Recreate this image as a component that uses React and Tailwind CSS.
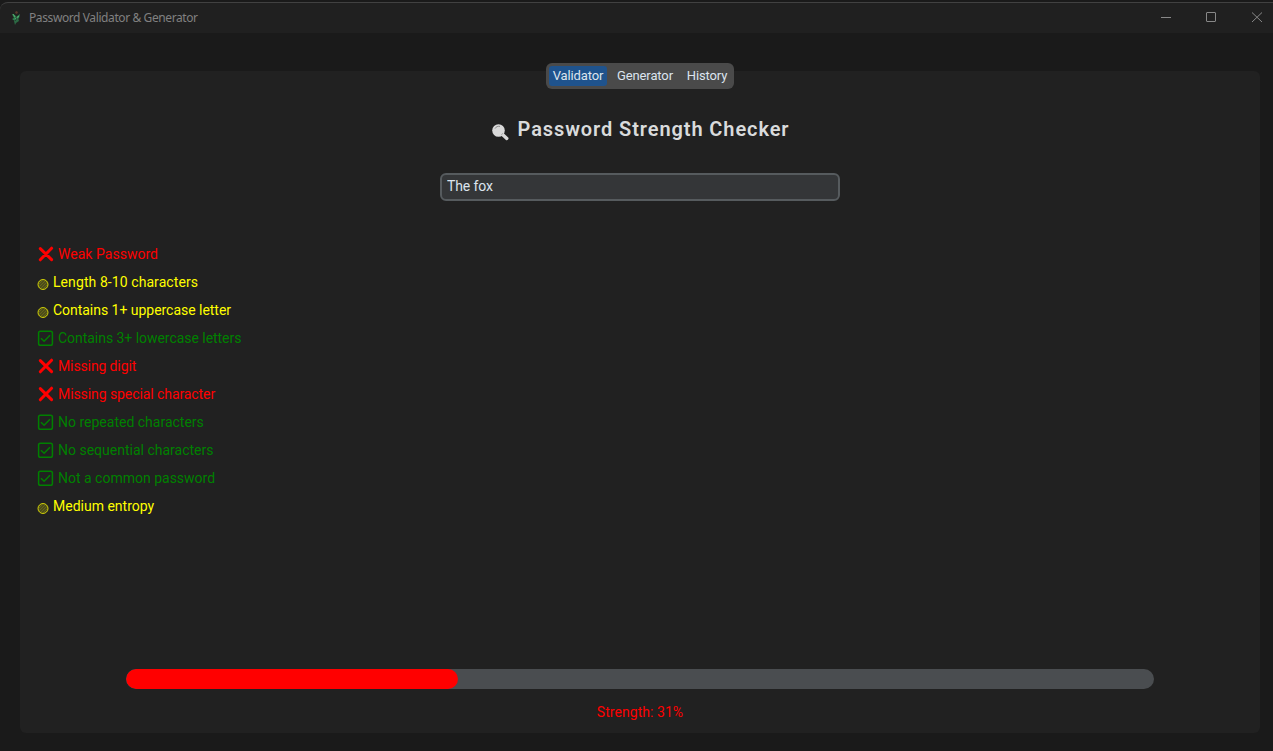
const tabs = ['Validator', 'Generator', 'History'];

const checks = [
  { status: 'fail', text: 'Weak Password', spacing: 'tracking-[0.03px]' },
  { status: 'partial', text: 'Length 8-10 characters', spacing: 'tracking-[0.08px]' },
  { status: 'partial', text: 'Contains 1+ uppercase letter', spacing: 'tracking-[-0.03px]' },
  { status: 'pass', text: 'Contains 3+ lowercase letters', spacing: 'tracking-[-0.04px]' },
  { status: 'fail', text: 'Missing digit', spacing: 'tracking-[-0.12px]' },
  { status: 'fail', text: 'Missing special character', spacing: 'tracking-[-0.08px]' },
  { status: 'pass', text: 'No repeated characters', spacing: 'tracking-normal' },
  { status: 'pass', text: 'No sequential characters', spacing: 'tracking-normal' },
  { status: 'pass', text: 'Not a common password', spacing: 'tracking-normal' },
  { status: 'partial', text: 'Medium entropy', spacing: 'tracking-normal' },
];

const tone = {
  fail: 'text-[#ff0000]',
  partial: 'text-[#ffff00]',
  pass: 'text-[#008000]',
};

function StatusIcon({ status }) {
  if (status === 'fail') {
    return (
      <svg width="16" height="16" viewBox="0 0 16 16" className="mr-1 ml-px shrink-0">
        <path d="M2.3 2.6 13.6 13.6M13.6 2.2 2.3 13.8" stroke="currentColor" strokeWidth="3" strokeLinecap="round" />
      </svg>
    );
  }
  if (status === 'partial') {
    return (
      <svg width="12" height="12" viewBox="0 0 12 12" className="relative top-[2px] mr-1 shrink-0" fill="none" stroke="currentColor">
        <circle cx="6" cy="6.5" r="5" fill="#4c4c1c" strokeWidth="0.9" strokeOpacity="0.85" />
        <path d="M2 6 5.5 2.5M2 9 8.5 2.5M3.5 10.5 10 4M6 11 10.5 6.5" strokeWidth="0.6" strokeOpacity="0.25" />
      </svg>
    );
  }
  return (
    <svg width="17" height="17" viewBox="0 0 17 17" className="mr-1 shrink-0" fill="none" stroke="currentColor">
      <rect x="1.6" y="1.3" width="13.8" height="14" rx="1.8" strokeWidth="1.5" />
      <path d="M4 8.2 7.1 11.2 13 5.2" strokeWidth="1.5" />
    </svg>
  );
}

function TitleBar() {
  return (
    <header className="flex h-[31px] shrink-0 items-center rounded-tl-lg border-t border-[#414141] bg-[#202020] pl-[9px] text-[#808080]">
      <svg width="14" height="16" viewBox="0 0 14 16" className="shrink-0">
        <path d="m7 1 2 1-1 2-2-1z" fill="#60392c" />
        <path d="m3 4 3 1 1 2 4-3-1 4-4 3-3-2 2-1z" fill="#2f8250" />
        <path d="m4 4 2 3M10 6 6 9" stroke="#57ad70" />
        <path d="m9 8 1 3-3 2-1 2-1-4z" fill="#2c6a44" />
        <path d="m7 7 0.5 2-1.5 2" stroke="#202b29" strokeWidth="0.7" fill="none" />
      </svg>
      <h1 className="ml-1.5 font-['Noto_Sans',sans-serif] text-[12px] leading-4 tracking-[-0.4px]">Password Validator &amp; Generator</h1>
      <svg width="104" height="12" viewBox="0 0 104 12" className="relative -top-px mr-[10px] ml-auto" fill="none" stroke="#888888">
        <path d="M2 6.5h10" />
        <rect x="47.5" y="1.5" width="9" height="9" rx="0.5" />
        <path d="m93 1.5 10 9.5m0-9.5-10 9.5" />
      </svg>
    </header>
  );
}

export default function App() {
  return (
    <div className="flex h-[751px] w-[1273px] flex-col overflow-hidden bg-[#1a1a1a] pt-[2px] font-[Roboto,sans-serif]">
      <TitleBar />
      <main className="mt-[38px] ml-5 flex h-[662px] w-[1240px] flex-col items-center rounded-md bg-[#212121]">
        <nav className="-mt-2 flex h-[26px] w-[188px] shrink-0 items-center rounded-md bg-[#4a4a4a] px-[3px] text-[13px] tracking-[-0.12px] text-[#dce4ee]">
          {tabs.map((t, i) => (
            <button
              key={t}
              className={
                i === 0
                  ? 'h-5 w-[58px] rounded-[3px] bg-[#1f538d] leading-5'
                  : i === 1
                    ? 'h-5 w-[76px] leading-5'
                    : 'h-5 w-12 leading-5'
              }
            >
              {t}
            </button>
          ))}
        </nav>

        <h2 className="mt-[26px] flex h-7 items-center text-[20px] font-semibold tracking-[0.91px] text-[#d9dbdc]">
          <svg width="18" height="18" viewBox="0 0 18 18" className="relative top-[3px] mr-[9px]">
            <path d="m11 11 4.8 4.4" stroke="#d9d9d9" strokeWidth="3.4" strokeLinecap="round" />
            <circle cx="7.5" cy="7.5" r="6.3" fill="#d9d9d9" />
            <path d="M4 5.6c1-2 3-2.6 5-2.2M11.7 10.6l-1.2 1" stroke="#777" strokeWidth="0.8" fill="none" />
          </svg>
          Password Strength Checker
        </h2>

        <input
          defaultValue="The fox"
          className="mt-[30px] h-7 w-[400px] shrink-0 rounded-md border-2 border-[#565b5e] bg-[#343638] px-[5px] pb-0.5 text-[14px] tracking-[-0.1px] text-[#dce4ee] outline-none"
        />

        <ul className="mt-[39px] w-full pl-[17px] text-[14px]">
          {checks.map((c) => (
            <li key={c.text} className={`flex h-7 items-center whitespace-pre ${tone[c.status]}`}>
              <StatusIcon status={c.status} />
              <span className={c.spacing}>{c.text}</span>
            </li>
          ))}
        </ul>

        <div className="mt-[149px] h-5 w-[1028px] shrink-0 overflow-hidden rounded-full bg-[#4a4d50]">
          <div className="h-full w-[332px] rounded-full bg-[#ff0000]" />
        </div>
        <p className="mt-[13px] text-[14px] leading-5 tracking-[0.05px] text-[#ff0000]">Strength: 31%</p>
      </main>
    </div>
  );
}
